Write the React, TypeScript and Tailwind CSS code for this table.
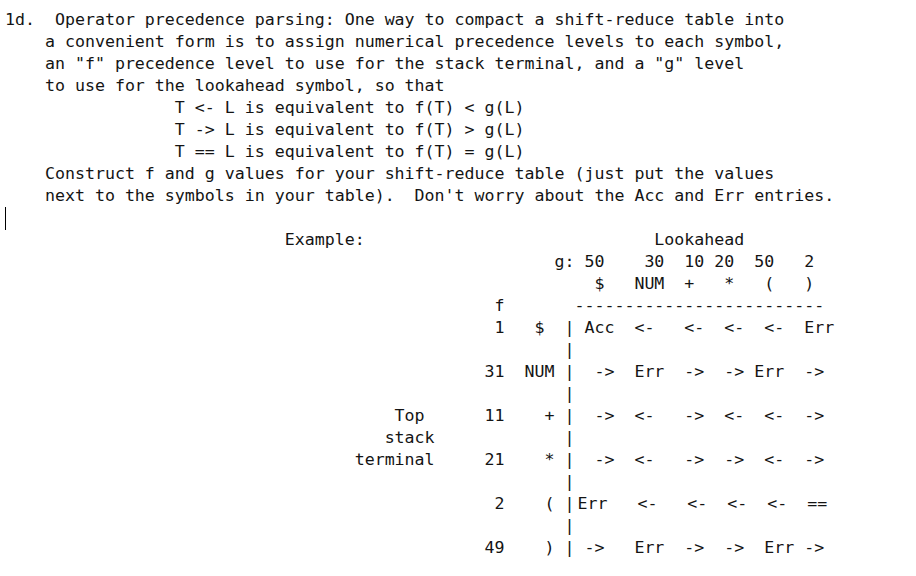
import React from "react";

type Part = [number, string];

function place(parts: Part[]): string {
  let s = "";
  for (const [col, text] of parts) {
    if (s.length < col) s += " ".repeat(col - s.length);
    s += text;
  }
  return s;
}

const lines: string[] = [
  "1d.  Operator precedence parsing: One way to compact a shift-reduce table into",
  "    a convenient form is to assign numerical precedence levels to each symbol,",
  '    an "f" precedence level to use for the stack terminal, and a "g" level',
  "    to use for the lookahead symbol, so that",
  place([[17, "T <- L is equivalent to f(T) < g(L)"]]),
  place([[17, "T -> L is equivalent to f(T) > g(L)"]]),
  place([[17, "T == L is equivalent to f(T) = g(L)"]]),
  "    Construct f and g values for your shift-reduce table (just put the values",
  "    next to the symbols in your table).  Don't worry about the Acc and Err entries.",
];

const tableTop: string[] = [
  place([[28, "Example:"], [65, "Lookahead"]]),
  place([[55, "g:"], [58, "50"], [64, "30"], [68, "10"], [71, "20"], [75, "50"], [80, "2"]]),
  place([[59, "$"], [63, "NUM"], [68, "+"], [72, "*"], [76, "("], [80, ")"]]),
  place([[49, "f"], [57, "-------------------------"]]),
  place([[49, "1"], [53, "$"], [56, "|"], [58, "Acc"], [63, "<-"], [68, "<-"], [72, "<-"], [76, "<-"], [80, "Err"]]),
  place([[56, "|"]]),
  place([[48, "31"], [52, "NUM"], [56, "|"], [59, "->"], [63, "Err"], [68, "->"], [72, "->"], [75, "Err"], [80, "->"]]),
  place([[56, "|"]]),
  place([[39, "Top"], [48, "11"], [54, "+"], [56, "|"], [59, "->"], [63, "<-"], [68, "->"], [72, "<-"], [76, "<-"], [80, "->"]]),
  place([[38, "stack"], [56, "|"]]),
  place([[35, "terminal"], [48, "21"], [54, "*"], [56, "|"], [59, "->"], [63, "<-"], [68, "->"], [72, "->"], [76, "<-"], [80, "->"]]),
  place([[56, "|"]]),
];

const rowParenLeft = place([[49, "2"], [54, "("], [56, "|"]]);
const rowParenRest = place([[0, "Err"], [6, "<-"], [11, "<-"], [15, "<-"], [19, "<-"], [23, "=="]]);

const tableBottom: string[] = [
  place([[56, "|"]]),
  place([[48, "49"], [54, ")"], [56, "|"], [58, "->"], [63, "Err"], [68, "->"], [72, "->"], [76, "Err"], [80, "->"]]),
];

export default function App() {
  return (
    <div className="w-[916px] h-[576px] overflow-hidden bg-white text-[#141414] pl-[5px] pt-[9px] font-['DejaVu_Sans_Mono',monospace] text-[16.6px] leading-[22px]">
      {lines.map((l, i) => (
        <div key={i} className="whitespace-pre h-[22px]">
          {l}
        </div>
      ))}
      <div className="h-[22px] flex items-center">
        <span className="block w-px h-[23px] bg-black" />
      </div>
      {tableTop.map((l, i) => (
        <div key={i} className="whitespace-pre h-[22px]">
          {l}
        </div>
      ))}
      <div className="whitespace-pre h-[22px]">
        {rowParenLeft}
        <span className="ml-[3px]">{rowParenRest}</span>
      </div>
      {tableBottom.map((l, i) => (
        <div key={i} className="whitespace-pre h-[22px]">
          {l}
        </div>
      ))}
    </div>
  );
}
